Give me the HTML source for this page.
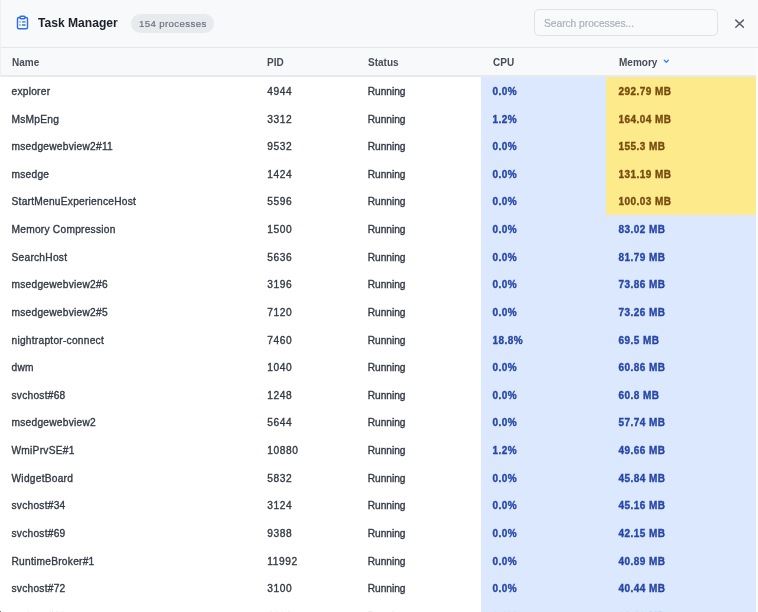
<!DOCTYPE html>
<html><head><meta charset="utf-8">
<style>
*{margin:0;padding:0;box-sizing:border-box}
html,body{width:758px;height:612px;overflow:hidden;background:#fff}
body{position:relative;font-family:"Liberation Sans",sans-serif;color:#333a45}
.hdr{position:absolute;left:0;top:0;width:758px;height:48px;background:#f8f9fb;border-bottom:1px solid #e4e6ea}
.icon{position:absolute;left:14.8px;top:15.4px;width:15px;height:15px}
.title{position:absolute;left:38px;top:14.2px;font-size:12.1px;font-weight:bold;color:#1c2029;line-height:18px;white-space:nowrap}
.badge{position:absolute;left:131px;top:14px;width:83px;height:18.5px;border-radius:10px;background:#e8eaee}
.badge span{position:absolute;left:8px;top:2.8px;font-size:9.6px;letter-spacing:0.4px;line-height:13px;color:#6b7280;white-space:nowrap;-webkit-text-stroke:0.2px currentColor}
.search{position:absolute;left:533.5px;top:9px;width:184.5px;height:26.8px;border:1px solid #dfe2e7;border-radius:5px;background:#f9fafb}
.search span{position:absolute;left:9.5px;top:8px;font-size:10.2px;line-height:12px;color:#aab0b9;white-space:nowrap;-webkit-text-stroke:0.2px currentColor}
.close{position:absolute;left:734px;top:18.5px;width:11px;height:10px}
.th{position:absolute;left:0;top:48px;width:758px;height:29px;background:#f8f9fb;border-bottom:2px solid #e8eaee}
.th span{position:absolute;top:8.6px;font-size:10px;line-height:12px;font-weight:bold;color:#474d57;white-space:nowrap}
.cpucol{position:absolute;left:481px;top:77px;width:275px;height:535px;background:#dbe8fe}
.row{position:absolute;left:0;width:758px;height:27.62px;will-change:transform}
.c{position:absolute;top:0;line-height:27.62px;font-size:10.2px;letter-spacing:0.25px;white-space:nowrap;padding-top:0.8px;-webkit-text-stroke:0.35px currentColor}
.n{left:11.5px}.p{left:267.3px;letter-spacing:0.55px}.s{left:367.8px;letter-spacing:-0.05px}
.cpu{left:492.5px;font-weight:bold;color:#2747a6;font-size:10px;letter-spacing:0.45px}
.mem{left:606px;width:150px;height:27.62px;padding-left:12.5px;font-weight:bold;color:#2747a6;font-size:10px;letter-spacing:0.45px}
.mem.hot{background:#fdea8a;color:#774b0f}
.rbar{position:absolute;left:756px;top:48px;width:2px;height:564px;background:#fbfcfd}
.title,.badge span,.search span,.th span{will-change:transform}
</style></head><body>
<div class="hdr">
<svg class="icon" viewBox="0 0 24 24" fill="none" stroke="#2f6fe6" stroke-width="2.3" stroke-linecap="round" stroke-linejoin="round">
<rect x="8" y="2" width="8" height="4" rx="1.5"/>
<path d="M16 4h2a2 2 0 0 1 2 2v14a2 2 0 0 1-2 2H6a2 2 0 0 1-2-2V6a2 2 0 0 1 2-2h2"/>
<path d="M12 11h4M12 16h4M8 11h.01M8 16h.01"/>
</svg>
<div class="title">Task Manager</div>
<div class="badge"><span>154 processes</span></div>
<div class="search"><span>Search processes...</span></div>
<svg class="close" viewBox="0 0 11 10" stroke="#5a606b" stroke-width="1.5" stroke-linecap="round"><path d="M1.8 1.1 L9.4 8.2 M9.4 1.1 L1.8 8.2"/></svg>
</div>
<div class="th">
<span style="left:11.5px">Name</span>
<span style="left:267px">PID</span>
<span style="left:367.5px">Status</span>
<span style="left:492.5px">CPU</span>
<span style="left:618.5px">Memory</span>
<svg style="position:absolute;left:662.9px;top:11px" width="7" height="5" viewBox="0 0 7 5" fill="none" stroke="#3b82f6" stroke-width="1.3" stroke-linecap="round" stroke-linejoin="round"><path d="M1.3 1.2 L3.3 3.2 L5.3 1.2"/></svg>
</div>
<div class="cpucol"></div>
<div class="row" style="top:77.00px"><span class="c n">explorer</span><span class="c p">4944</span><span class="c s">Running</span><span class="c cpu">0.0%</span><span class="c mem hot">292.79 MB</span></div>
<div class="row" style="top:104.62px"><span class="c n">MsMpEng</span><span class="c p">3312</span><span class="c s">Running</span><span class="c cpu">1.2%</span><span class="c mem hot">164.04 MB</span></div>
<div class="row" style="top:132.24px"><span class="c n">msedgewebview2#11</span><span class="c p">9532</span><span class="c s">Running</span><span class="c cpu">0.0%</span><span class="c mem hot">155.3 MB</span></div>
<div class="row" style="top:159.86px"><span class="c n">msedge</span><span class="c p">1424</span><span class="c s">Running</span><span class="c cpu">0.0%</span><span class="c mem hot">131.19 MB</span></div>
<div class="row" style="top:187.48px"><span class="c n">StartMenuExperienceHost</span><span class="c p">5596</span><span class="c s">Running</span><span class="c cpu">0.0%</span><span class="c mem hot">100.03 MB</span></div>
<div class="row" style="top:215.10px"><span class="c n">Memory Compression</span><span class="c p">1500</span><span class="c s">Running</span><span class="c cpu">0.0%</span><span class="c mem">83.02 MB</span></div>
<div class="row" style="top:242.72px"><span class="c n">SearchHost</span><span class="c p">5636</span><span class="c s">Running</span><span class="c cpu">0.0%</span><span class="c mem">81.79 MB</span></div>
<div class="row" style="top:270.34px"><span class="c n">msedgewebview2#6</span><span class="c p">3196</span><span class="c s">Running</span><span class="c cpu">0.0%</span><span class="c mem">73.86 MB</span></div>
<div class="row" style="top:297.96px"><span class="c n">msedgewebview2#5</span><span class="c p">7120</span><span class="c s">Running</span><span class="c cpu">0.0%</span><span class="c mem">73.26 MB</span></div>
<div class="row" style="top:325.58px"><span class="c n">nightraptor-connect</span><span class="c p">7460</span><span class="c s">Running</span><span class="c cpu">18.8%</span><span class="c mem">69.5 MB</span></div>
<div class="row" style="top:353.20px"><span class="c n">dwm</span><span class="c p">1040</span><span class="c s">Running</span><span class="c cpu">0.0%</span><span class="c mem">60.86 MB</span></div>
<div class="row" style="top:380.82px"><span class="c n">svchost#68</span><span class="c p">1248</span><span class="c s">Running</span><span class="c cpu">0.0%</span><span class="c mem">60.8 MB</span></div>
<div class="row" style="top:408.44px"><span class="c n">msedgewebview2</span><span class="c p">5644</span><span class="c s">Running</span><span class="c cpu">0.0%</span><span class="c mem">57.74 MB</span></div>
<div class="row" style="top:436.06px"><span class="c n">WmiPrvSE#1</span><span class="c p">10880</span><span class="c s">Running</span><span class="c cpu">1.2%</span><span class="c mem">49.66 MB</span></div>
<div class="row" style="top:463.68px"><span class="c n">WidgetBoard</span><span class="c p">5832</span><span class="c s">Running</span><span class="c cpu">0.0%</span><span class="c mem">45.84 MB</span></div>
<div class="row" style="top:491.30px"><span class="c n">svchost#34</span><span class="c p">3124</span><span class="c s">Running</span><span class="c cpu">0.0%</span><span class="c mem">45.16 MB</span></div>
<div class="row" style="top:518.92px"><span class="c n">svchost#69</span><span class="c p">9388</span><span class="c s">Running</span><span class="c cpu">0.0%</span><span class="c mem">42.15 MB</span></div>
<div class="row" style="top:546.54px"><span class="c n">RuntimeBroker#1</span><span class="c p">11992</span><span class="c s">Running</span><span class="c cpu">0.0%</span><span class="c mem">40.89 MB</span></div>
<div class="row" style="top:574.16px"><span class="c n">svchost#72</span><span class="c p">3100</span><span class="c s">Running</span><span class="c cpu">0.0%</span><span class="c mem">40.44 MB</span></div>
<div class="row" style="top:601.78px;opacity:0.35"><span class="c n">svchost#12</span><span class="c p">4120</span><span class="c s">Running</span><span class="c cpu">0.0%</span><span class="c mem">39.12 MB</span></div>
<div class="rbar"></div>
<div style="position:absolute;left:0;top:0;width:1px;height:1px;background:#a8a8a8"></div>
<div style="position:absolute;left:0;top:611px;width:1px;height:1px;background:#777"></div>
<div style="position:absolute;left:0;top:0;width:1px;height:77px;background:#eef0f3"></div>
</body></html>
